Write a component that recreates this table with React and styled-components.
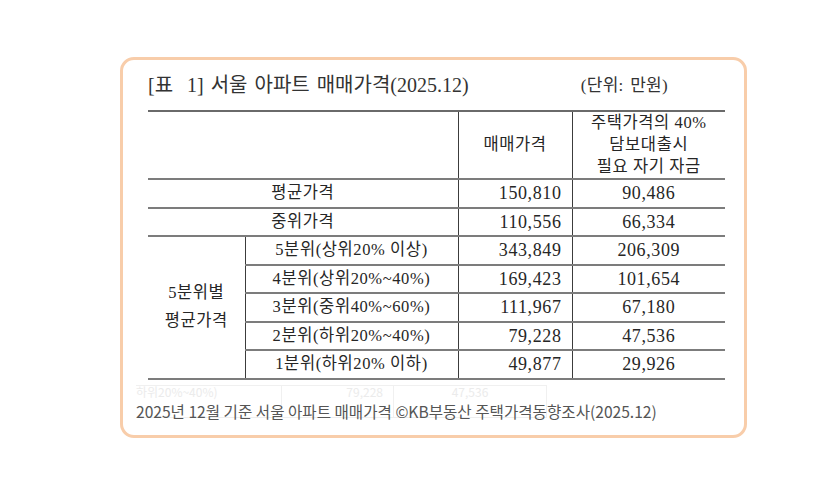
import React from 'react';
import styled, { createGlobalStyle } from 'styled-components';

const serif = '"Liberation Serif", "Noto Sans CJK KR", serif';
const sans = '"Noto Sans CJK KR", "Noto Sans", sans-serif';

const GlobalStyle = createGlobalStyle`
  html, body {
    margin: 0;
    padding: 0;
    background: #ffffff;
  }
`;

const Page = styled.div`
  width: 836px;
  height: 496px;
  padding: 57px 0 0 120px;
  box-sizing: border-box;
`;

const Card = styled.div`
  width: 627px;
  height: 381px;
  box-sizing: border-box;
  border: 3px solid #f8cdaa;
  border-radius: 14px;
  padding: 0 13px;
  background: #fff;
`;

const Figure = styled.div`
  padding-left: 12px;
`;

const TitleRow = styled.div`
  display: flex;
  align-items: center;
  justify-content: space-between;
  height: 50px;
  padding: 0 63px 4px 0;
  box-sizing: border-box;
  font-family: ${serif};
  color: #333;
`;

const Title = styled.div`
  font-size: 20px;
  letter-spacing: 0;
  word-spacing: 2px;
`;

const Unit = styled.div`
  font-size: 17px;
  letter-spacing: 0.3px;
  word-spacing: 2px;
`;

const Table = styled.table`
  width: 577px;
  border-collapse: collapse;
  table-layout: fixed;
  font-family: ${serif};
  color: #262626;
  letter-spacing: 0.6px;
`;

const HeadRow = styled.tr`
  height: 68px;
  border-top: 2px solid #6a6a6a;
  border-bottom: 2px solid #7c7c7c;
`;

const Row = styled.tr`
  height: 28.5px;
  border-bottom: 2px solid #7c7c7c;
`;

const Cell = styled.td`
  padding: 0 ${p => (p.$num ? '10px' : '0')} 0 0;
  text-align: ${p => (p.$num ? 'right' : 'center')};
  vertical-align: middle;
  line-height: ${p => (p.$lh ? p.$lh : '22px')};
  border-left: ${p => (p.$line ? '1px solid #3c3c3c' : 'none')};
  font-size: ${p => (p.$big ? '18px' : '16.5px')};
  white-space: nowrap;
`;

const Footer = styled.div`
  position: relative;
  height: 50px;
`;

/* faint leftover row from the source scan, sits behind the caption */
const Ghost = styled.div`
  position: absolute;
  top: 5px;
  left: 0;
  display: grid;
  grid-template-columns: 145px 112px 154px;
  height: 31px;
  border-top: 1px solid #f0f0f0;
  border-bottom: 1px solid #eeeeee;
  font-family: ${sans};
  font-size: 12px;
  color: #ebebeb;
  line-height: 12px;
`;

const GhostCell = styled.div`
  text-align: ${p => p.$align || 'left'};
  padding-right: ${p => (p.$align === 'right' ? '10px' : '0')};
  border-left: ${p => (p.$line ? '1px solid #f0f0f0' : 'none')};
  border-right: ${p => (p.$end ? '1px solid #f0f0f0' : 'none')};
  white-space: nowrap;
`;

const Caption = styled.div`
  position: relative;
  padding-top: 23px;
  font-family: ${sans};
  font-size: 15.6px;
  line-height: 17px;
  color: #555;
`;

const rows = [
  ['5분위(상위20% 이상)', '343,849', '206,309'],
  ['4분위(상위20%~40%)', '169,423', '101,654'],
  ['3분위(중위40%~60%)', '111,967', '67,180'],
  ['2분위(하위20%~40%)', '79,228', '47,536'],
  ['1분위(하위20% 이하)', '49,877', '29,926'],
];

export default function App() {
  return (
    <Page>
      <GlobalStyle />
      <Card>
        <Figure>
          <TitleRow>
            <Title>[표 &nbsp;1] 서울 아파트 매매가격(2025.12)</Title>
            <Unit>(단위: 만원)</Unit>
          </TitleRow>
          <Table>
            <colgroup>
              <col style={{ width: 97 }} />
              <col style={{ width: 213 }} />
              <col style={{ width: 114 }} />
              <col style={{ width: 153 }} />
            </colgroup>
            <tbody>
              <HeadRow>
                <Cell colSpan={2} />
                <Cell $line>매매가격</Cell>
                <Cell $line $lh="22px">
                  주택가격의 40%
                  <br />
                  담보대출시
                  <br />
                  필요 자기 자금
                </Cell>
              </HeadRow>
              <Row>
                <Cell colSpan={2}>평균가격</Cell>
                <Cell $line $num $big>150,810</Cell>
                <Cell $line $big>90,486</Cell>
              </Row>
              <Row>
                <Cell colSpan={2}>중위가격</Cell>
                <Cell $line $num $big>110,556</Cell>
                <Cell $line $big>66,334</Cell>
              </Row>
              {rows.map((r, i) => (
                <Row key={r[0]}>
                  {i === 0 && (
                    <Cell rowSpan={5} $lh="28px">
                      5분위별
                      <br />
                      평균가격
                    </Cell>
                  )}
                  <Cell $line>{r[0]}</Cell>
                  <Cell $line $num $big>{r[1]}</Cell>
                  <Cell $line $big>{r[2]}</Cell>
                </Row>
              ))}
            </tbody>
          </Table>
        </Figure>
        <Footer>
          <Ghost>
            <GhostCell>하위20%~40%)</GhostCell>
            <GhostCell $line $align="right">79,228</GhostCell>
            <GhostCell $line $end $align="center">47,536</GhostCell>
          </Ghost>
          <Caption>2025년 12월 기준 서울 아파트 매매가격 ©KB부동산 주택가격동향조사(2025.12)</Caption>
        </Footer>
      </Card>
    </Page>
  );
}
